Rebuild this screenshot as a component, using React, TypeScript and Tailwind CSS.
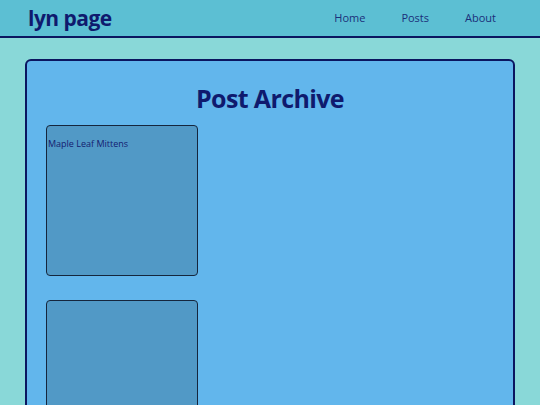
const posts = [{ id: 1, title: "Maple Leaf Mittens" }, { id: 2, title: "" }];

export default function App() {
  return (
    <div className="min-h-[405px] bg-[#89d8d8] font-['Open_Sans',sans-serif] text-[#0f1a6e]">
      <header className="h-[38px] bg-[#5cbfd3] border-b-2 border-[#0b1660] flex items-center justify-between pl-[28px] pr-[44px]">
        <h1 className="text-[21px] font-bold tracking-tight leading-none">lyn page</h1>
        <nav className="flex gap-[36px] text-[11px] text-[#1b2f7a]">
          <a>Home</a>
          <a>Posts</a>
          <a>About</a>
        </nav>
      </header>
      <main className="px-[25px] pt-[21px]">
        <div className="bg-[#62b6ec] border-2 border-[#0b1660] rounded-[6px] pt-[22px] px-[19px] pb-10 min-h-[400px]">
          <h2 className="text-center text-[25px] font-bold leading-[30px] tracking-tight mb-[12px]">Post Archive</h2>
          <div className="flex flex-col gap-[24px]">
            {posts.map((p) => (
              <div
                key={p.id}
                className="w-[152px] h-[151px] bg-[#5199c6] border-[1.5px] border-[#15263d] rounded-[4px] pt-[11px] px-[1px]"
              >
                <p className="text-[9px] leading-[14px] text-[#142070]">{p.title}</p>
              </div>
            ))}
          </div>
        </div>
      </main>
    </div>
  );
}
